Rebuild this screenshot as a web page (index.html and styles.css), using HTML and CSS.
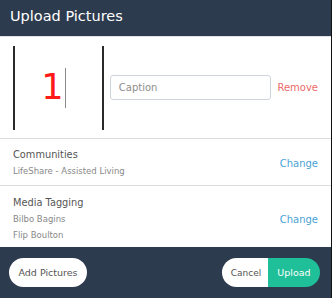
FILE: index.html
```html
<!DOCTYPE HTML>
<html lang="en">
  <head>
    <meta charset="UTF-8">
    <title>Upload Pictures</title>
    <link rel="stylesheet" href="styles.css">
  </head>
  <body>
    <div class="modal">
        <div class="cabecera">Upload Pictures</div>
        <div class="cuerpo">
            <div class="foto-fila">
                <div class="foto">
                    <span class="numero">1</span><span class="cursor"></span>
                </div>
                <input type="text" class="caption" placeholder="Caption">
                <a class="remove">Remove</a>
            </div>
            <div class="seccion">
                <div class="seccion-info">
                    <div class="seccion-titulo">Communities</div>
                    <div class="seccion-item">LifeShare - Assisted Living</div>
                </div>
                <a class="change">Change</a>
            </div>
            <div class="seccion seccion-ultima">
                <div class="seccion-info">
                    <div class="seccion-titulo">Media Tagging</div>
                    <div class="seccion-item">Bilbo Bagins</div>
                    <div class="seccion-item">Flip Boulton</div>
                </div>
                <a class="change">Change</a>
            </div>
        </div>
        <div class="pie">
            <button class="boton boton-blanco boton-add">Add Pictures</button>
            <div class="grupo">
                <button class="boton boton-blanco boton-izq">Cancel</button>
                <button class="boton boton-verde">Upload</button>
            </div>
        </div>
    </div>
  </body>
</html>
```

FILE: styles.css
```css
html, body {
    padding: 0;
    margin: 0;
    border: 0;
    width: 100%;
    height: 100%;
    background: #fff;
}

.modal {
    width: 331px;
    height: 298px;
    border-right: solid 1px #111;
    display: flex;
    flex-direction: column;
    font-family: "DejaVu Sans", Verdana, sans-serif;
}

.cabecera {
    height: 37px;
    flex-shrink: 0;
    box-sizing: border-box;
    padding: 8px 10px 0;
    background-color: #2d3b4e;
    color: #fff;
    font-size: 14.5px;
    border-bottom: solid 1px #dfe2e6;
}

.cuerpo {
    flex: 1;
}

.foto-fila {
    display: flex;
    align-items: center;
    height: 102px;
    box-sizing: border-box;
    padding: 0 13px 0 13px;
    border-bottom: solid 1px #ddd;
}

.foto {
    width: 91px;
    height: 84px;
    box-sizing: border-box;
    border-left: solid 2px #2a2a2a;
    border-right: solid 2px #2a2a2a;
    display: flex;
    align-items: center;
    justify-content: center;
    padding-right: 10px;
}

.numero {
    color: #ff1a1a;
    font-family: "DejaVu Sans", sans-serif;
    font-size: 35px;
    line-height: 1;
}

.cursor {
    width: 1px;
    height: 40px;
    background: #8a8a8a;
    margin-left: 1px;
}

.caption {
    margin-left: 6px;
    width: 162px;
    height: 25px;
    box-sizing: border-box;
    border: solid 1px #cfd4dc;
    border-radius: 3px;
    padding: 0 8px;
    font-family: "DejaVu Sans", sans-serif;
    font-size: 10px;
    color: #888;
}

.caption::placeholder {
    color: #8d8d8d;
}

.remove {
    margin-left: 6px;
    color: #ec6a6a;
    font-size: 10px;
}

.seccion {
    display: flex;
    align-items: center;
    justify-content: space-between;
    padding: 8px 13px 6px 13px;
    border-bottom: solid 1px #ddd;
}

.seccion-ultima {
    border-bottom: none;
    padding: 9px 13px 3px 13px;
}

.seccion-titulo {
    font-size: 9.8px;
    color: #555;
    line-height: 16px;
}

.seccion-item {
    font-size: 8.5px;
    color: #888;
    line-height: 16px;
}

.change {
    color: #4aa3d6;
    font-size: 10px;
}

.pie {
    height: 51px;
    flex-shrink: 0;
    background-color: #2d3b4e;
    display: flex;
    align-items: center;
    justify-content: space-between;
    padding: 0 11px 0 9px;
}

.grupo {
    display: flex;
}

.boton {
    height: 29px;
    border: none;
    border-radius: 15px;
    font-family: "DejaVu Sans", sans-serif;
    font-size: 9.5px;
    padding: 0;
}

.boton-add {
    width: 78px;
}

.boton-blanco {
    background: #fff;
    color: #555;
}

.boton-izq {
    width: 46px;
    border-radius: 15px 0 0 15px;
    font-size: 9px;
    padding-left: 2px;
}

.boton-verde {
    width: 52px;
    background: #1fbf99;
    color: #fff;
    border-radius: 0 15px 15px 0;
}
```
